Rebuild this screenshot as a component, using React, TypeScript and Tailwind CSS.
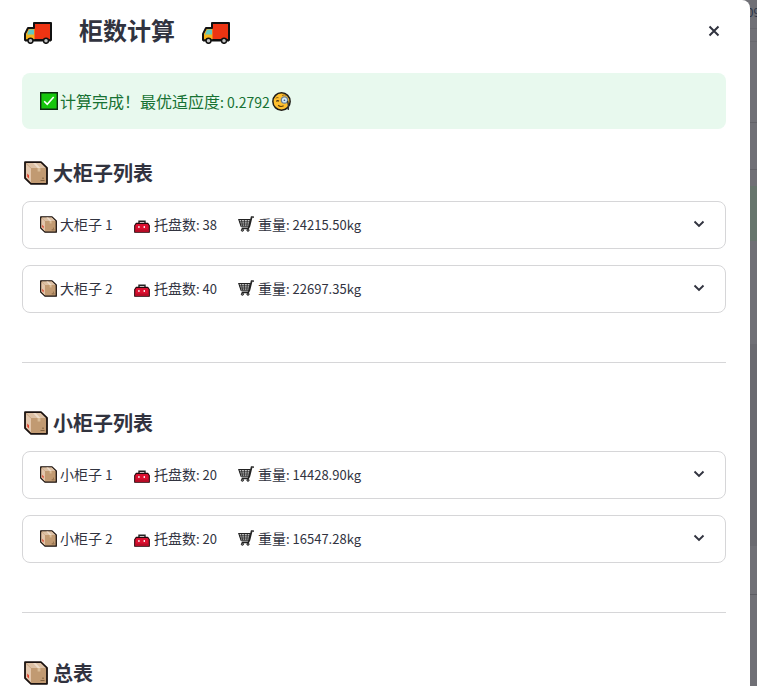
import React from "react";

type IconProps = { className: string };

function Truck({ className }: IconProps) {
  return (
    <svg viewBox="0 0 28 22" className={className} aria-hidden="true">
      <path d="M10 1H27V18H1V12L4 6H10Z" fill="#ee3412" stroke="#111" strokeWidth="2" strokeLinejoin="round" />
      <path d="M2 17.5V12L4.8 7H10.5V17.5Z" fill="#f5b51c" />
      <path d="M3 12.5L5 7.5H10V12.5Z" fill="#62c8c0" />
      <path d="M1 18.5H27" stroke="#111" strokeWidth="2" />
      <circle cx="6.5" cy="18.8" r="2.5" fill="#c4c4c4" stroke="#111" strokeWidth="1.5" />
      <circle cx="22" cy="18.8" r="2.5" fill="#c4c4c4" stroke="#111" strokeWidth="1.5" />
    </svg>
  );
}

function Package({ className }: IconProps) {
  return (
    <svg viewBox="0 0 24 24" className={className} aria-hidden="true">
      <path d="M1 1.2H17L23 7V22.8H7L1 17Z" fill="#c19a72" stroke="#1a1210" strokeWidth="1.8" strokeLinejoin="round" />
      <path d="M2.2 2.1H16.6L21.8 7H7Z" fill="#dcc0a4" />
      <path d="M2 2.8L7 7.4V21.4L2 16.6Z" fill="#e3c6ac" />
      <path d="M9 2.1H11.6L16.4 7H13.6Z" fill="#eddccb" />
      <path d="M13.6 7H16.4V10.5H13.6Z" fill="#dabd98" />
      <path d="M3.2 12.5L5 14.3V17.5L3.2 15.7Z" fill="#e0442e" />
      <path d="M16.5 19.5H20.5M19 16.5V18" stroke="#80603f" strokeWidth="1.2" />
    </svg>
  );
}

function Toolbox({ className }: IconProps) {
  return (
    <svg viewBox="0 0 16 13" className={className} aria-hidden="true">
      <path d="M5 3.4V1.2H11V3.4" fill="none" stroke="#222" strokeWidth="1.4" />
      <path d="M2.2 3.4H13.8L15.3 5.5V12.3H0.7V5.5Z" fill="#dc1030" stroke="#26070b" strokeWidth="1.1" strokeLinejoin="round" />
      <path d="M1.3 9.5H14.7V11.7H1.3Z" fill="#b80c26" />
      <path d="M4.2 6H5.6V8H4.2ZM9.6 6H11V8H9.6Z" fill="#fbe3e6" />
    </svg>
  );
}

function Cart({ className }: IconProps) {
  return (
    <svg viewBox="0 0 16 16" className={className} aria-hidden="true" fill="none" stroke="#222">
      <path d="M0.8 3.5H12.2L11 10.2H3Z" fill="#c4c4c4" strokeWidth="1.1" />
      <path d="M1.4 5.8H11.8M2.2 8H11.4M3.4 3.5L4.6 10.2M6.4 3.5V10.2M9.4 3.5L8.8 10.2" strokeWidth="0.8" />
      <path d="M15.8 1.2H13.6L11.4 10.2L10.2 12.4H3.6" strokeWidth="1.7" />
      <path d="M15.2 1.2H13.8" stroke="#999" strokeWidth="0.6" />
      <circle cx="4.4" cy="14.2" r="1.1" fill="#888" />
      <circle cx="10" cy="14.2" r="1.1" fill="#888" />
    </svg>
  );
}

function CheckMark({ className }: IconProps) {
  return (
    <svg viewBox="0 0 18 18" className={className} aria-hidden="true">
      <path d="M0.7 0.7H17.3V17.3H0.7Z" fill="#16c60c" stroke="#0d2b10" strokeWidth="1.4" />
      <path d="M4.2 9.3L7.2 12.3L13.7 5" fill="none" stroke="#fff" strokeWidth="1.6" />
    </svg>
  );
}

function MonocleFace({ className }: IconProps) {
  return (
    <svg viewBox="0 0 18 18" className={className} aria-hidden="true">
      <circle cx="9" cy="9" r="8.2" fill="#ffbf2e" stroke="#1c1a16" strokeWidth="1.4" />
      <path d="M3.5 6Q4.6 4.8 6.2 5.4M9.6 3.4Q11.6 2 13.8 3.2" fill="none" stroke="#7a5518" strokeWidth="0.8" />
      <path d="M4.2 9Q5.3 7.6 6.6 8.8" fill="none" stroke="#4a3310" strokeWidth="1.2" />
      <circle cx="11.8" cy="7.6" r="3" fill="#d3e9f7" stroke="#6b7f92" strokeWidth="1.2" />
      <circle cx="11.8" cy="7.8" r="0.8" fill="#3c5a80" />
      <path d="M14.8 8.6Q16 12 15.4 17" fill="none" stroke="#333" strokeWidth="1.4" />
      <path d="M5.8 12.6Q8 14.6 11 13" fill="none" stroke="#5b3b0c" strokeWidth="1.1" />
    </svg>
  );
}

function Chevron({ className }: IconProps) {
  return (
    <svg viewBox="0 0 12 8" className={className} aria-hidden="true" fill="none" stroke="#31333f" strokeWidth="1.9">
      <path d="M1.5 1.5L6 6L10.5 1.5" />
    </svg>
  );
}

type Cabinet = { name: string; index: number; pallets: number; weight: string };

const large: Cabinet[] = [
  { name: "大柜子", index: 1, pallets: 38, weight: "24215.50kg" },
  { name: "大柜子", index: 2, pallets: 40, weight: "22697.35kg" },
];
const small: Cabinet[] = [
  { name: "小柜子", index: 1, pallets: 20, weight: "14428.90kg" },
  { name: "小柜子", index: 2, pallets: 20, weight: "16547.28kg" },
];

function CabinetRow({ item }: { item: Cabinet }) {
  return (
    <button
      type="button"
      aria-expanded="false"
      className="flex h-12 w-full items-center rounded-lg border border-[#d6d6d8] pb-[2px] pl-[17px] pr-5 text-left text-sm"
    >
      <span className="flex w-[94px] items-center gap-[3px]">
        <Package className="size-[17px]" />
        <span>{item.name} <span className="text-[13px]">{item.index}</span></span>
      </span>
      <span className="flex w-[104px] items-center gap-1">
        <Toolbox className="mt-1 h-[13px] w-4" />
        <span>托盘数<span className="text-[13px]">: {item.pallets}</span></span>
      </span>
      <span className="flex items-center gap-1">
        <Cart className="size-4" />
        <span>重量<span className="text-[13px]">: {item.weight}</span></span>
      </span>
      <Chevron className="ml-auto h-2 w-3" />
    </button>
  );
}

function SectionTitle({ children }: { children: string }) {
  return (
    <h2 className="flex h-8 items-center gap-[5px] pl-[2px] text-xl font-bold">
      <Package className="size-6" />
      {children}
    </h2>
  );
}

function Section({ title, items }: { title: string; items: Cabinet[] }) {
  return (
    <section>
      <SectionTitle>{title}</SectionTitle>
      <div className="mt-3 flex flex-col gap-4">
        {items.map((item) => (
          <CabinetRow key={item.index} item={item} />
        ))}
      </div>
      <hr className="mb-11 mt-[49px] border-[#d6d6d8]" />
    </section>
  );
}

export default function App() {
  return (
    <div className="flex h-screen overflow-hidden bg-[#707076] font-['Noto_Sans_CJK_SC',sans-serif] text-[#31333f]">
      <div role="dialog" aria-labelledby="dialog-title" className="min-w-0 flex-1 overflow-hidden rounded-tr-lg bg-white pl-[22px] pr-6">
        <header className="flex h-[73px] items-start justify-between pt-3">
          <h1 id="dialog-title" className="flex h-9 items-center gap-[27px] pl-[2px] text-2xl font-bold">
            <Truck className="mt-[6px] h-[22px] w-7" />
            柜数计算
            <Truck className="mt-[6px] h-[22px] w-7" />
          </h1>
          <button type="button" aria-label="关闭" className="flex h-[38px] w-6 items-center justify-center">
            <svg viewBox="0 0 12 12" className="size-3" fill="none" stroke="#31333f" strokeWidth="2">
              <path d="M1.5 1.5L10.5 10.5M10.5 1.5L1.5 10.5" />
            </svg>
          </button>
        </header>
        <div role="status" className="mb-7 flex h-14 items-center gap-[2px] rounded-lg bg-[#e8f9ee] pl-[18px] text-base text-[#177233]">
          <CheckMark className="size-[18px]" />
          <span>计算完成！最优适应度<span className="text-sm">: 0.2792</span></span>
          <MonocleFace className="size-[19px]" />
        </div>
        <Section title="大柜子列表" items={large} />
        <Section title="小柜子列表" items={small} />
        <SectionTitle>总表</SectionTitle>
      </div>
      <aside aria-hidden="true" className="w-[7px] shrink-0 overflow-hidden">
        <div className="flex h-7 justify-center pt-1 text-xs leading-4 text-[#2a3447]">09</div>
        <div className="h-[14px] border-y border-[#68686e]" />
        <div className="h-[81px] border-b border-[#626268]" />
        <div className="h-[47px] border-b border-[#626268]" />
        <div className="mt-4 h-[55px] bg-[#67756d]" />
        <div className="mt-[103px] h-[202px] bg-[#6a6a70]" />
        <div className="h-[49px] border-b border-[#5c5c62]" />
      </aside>
    </div>
  );
}
